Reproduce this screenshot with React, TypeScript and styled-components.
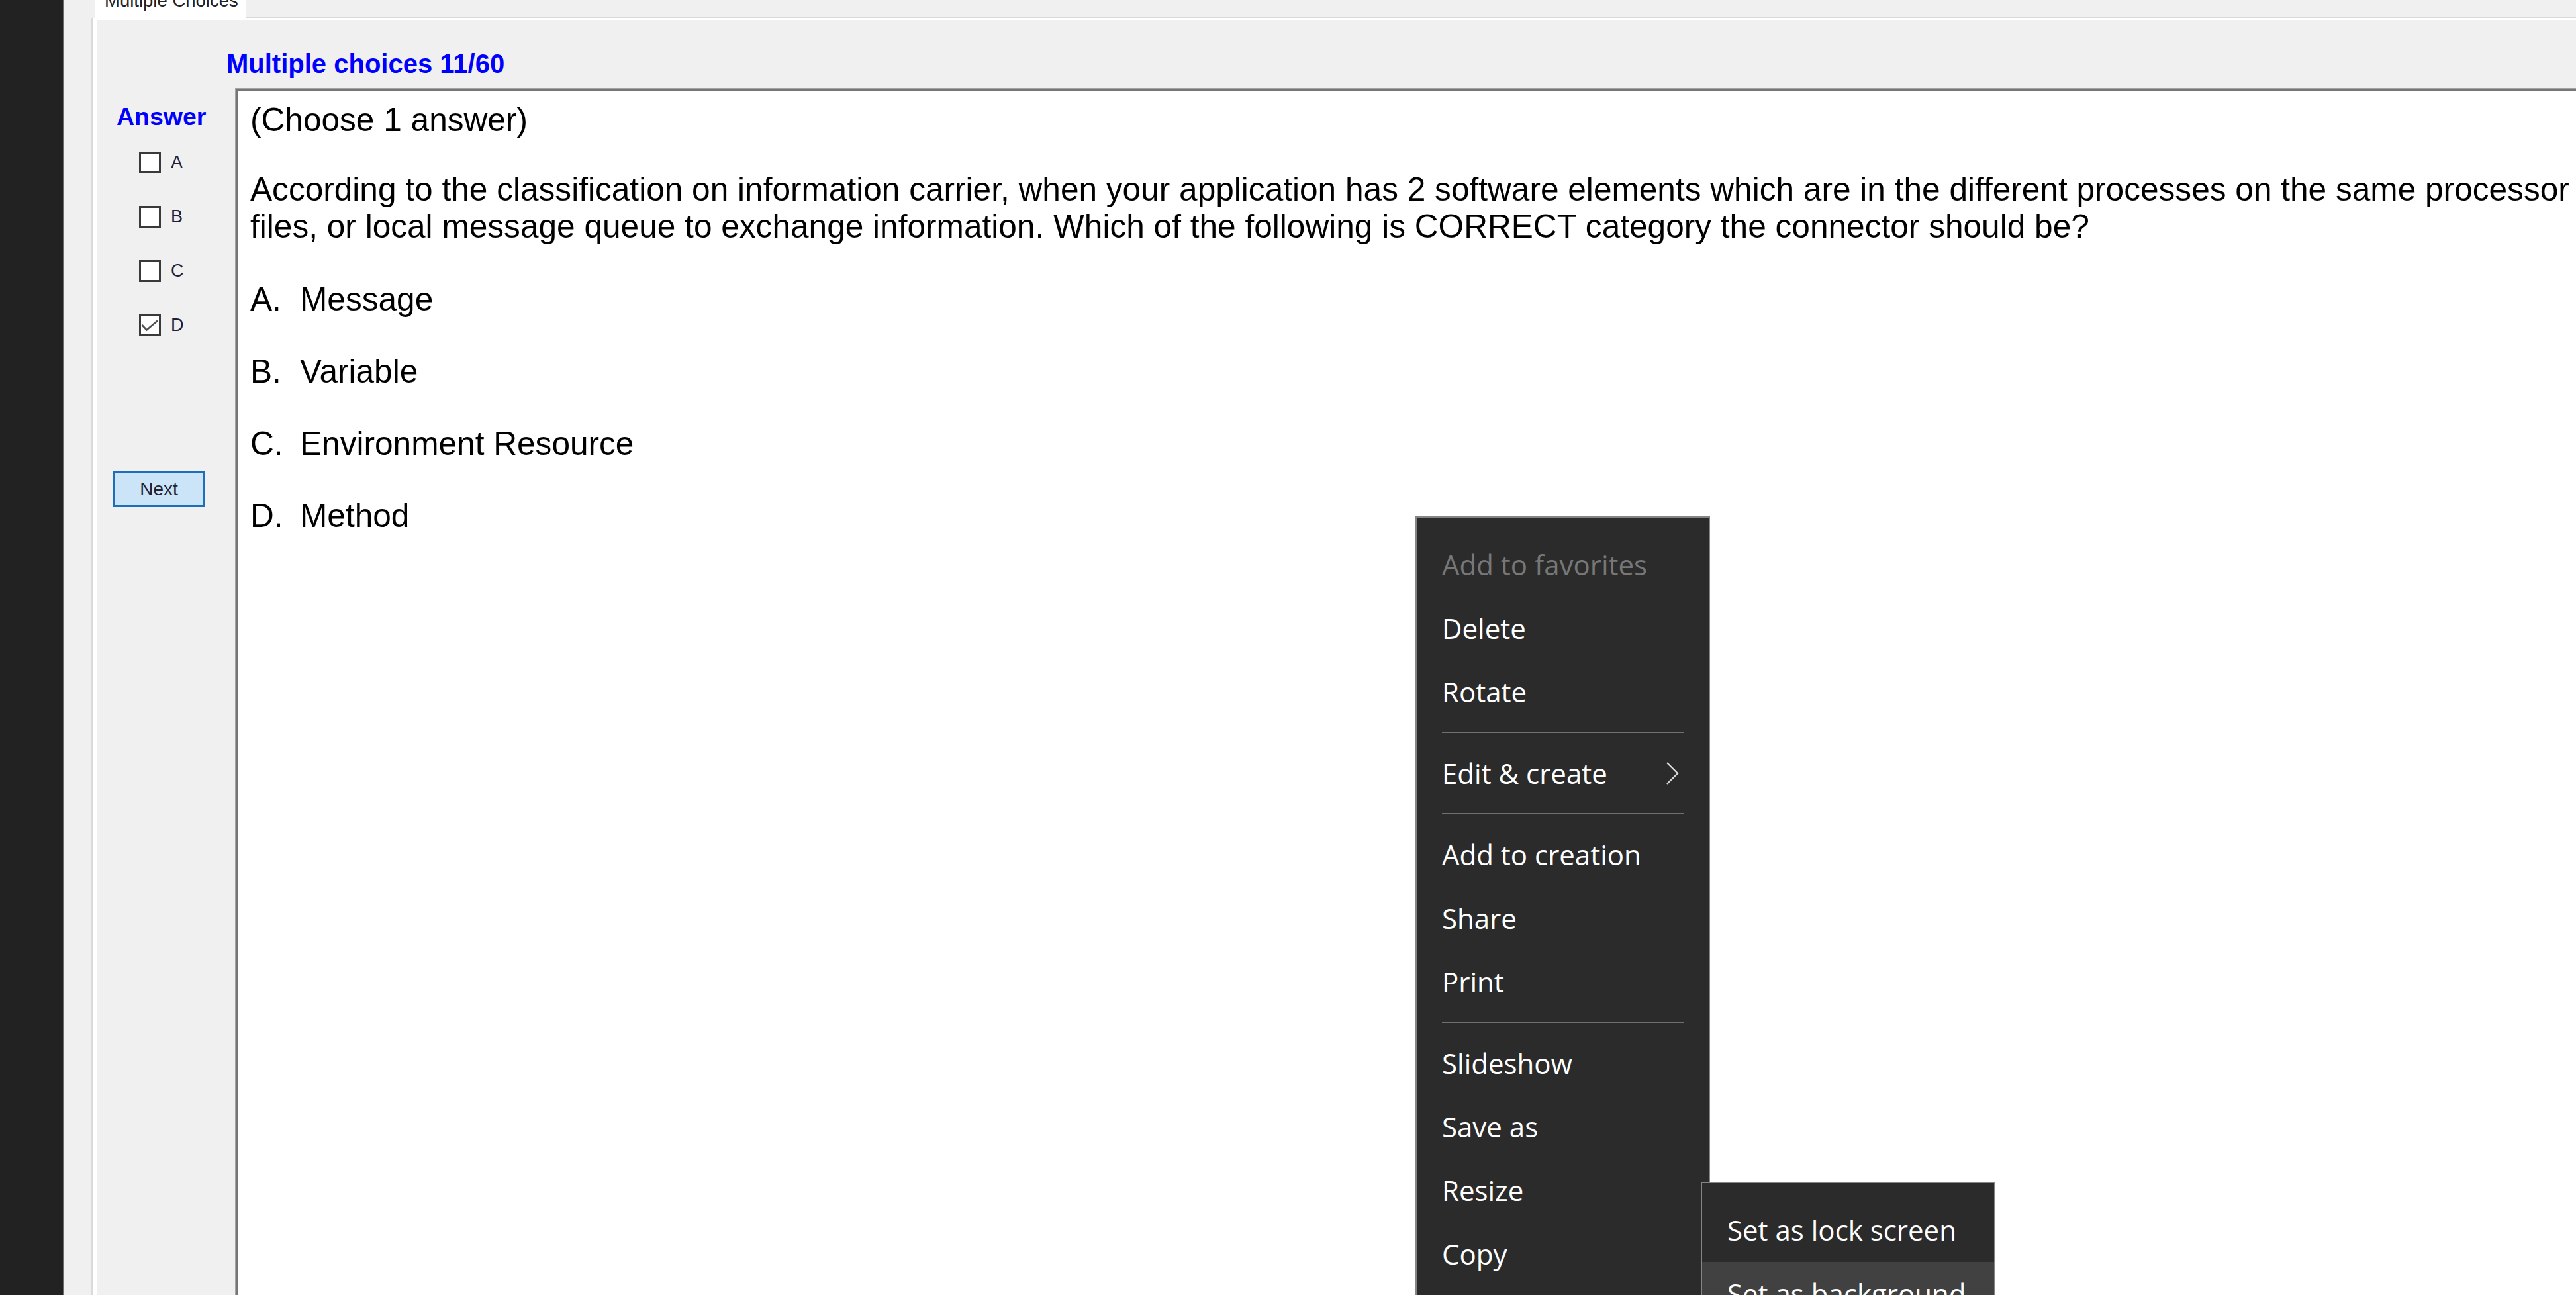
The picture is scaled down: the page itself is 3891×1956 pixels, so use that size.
import React from "react";
import styled, { createGlobalStyle } from "styled-components";

const Global = createGlobalStyle`
  html, body { margin: 0; padding: 0; background: #f0f0f0; }
  body { overflow: hidden; }
`;

const Screen = styled.div`
  position: relative;
  display: flex;
  width: 3891px;
  height: 1956px;
  overflow: hidden;
  background: #f0f0f0;
  font-family: "Liberation Sans", Arial, sans-serif;
`;

const DarkStrip = styled.div`
  flex: none;
  width: 95px;
  background: #222222;
  border-right: 1px solid #6b6b6b;
`;

const Window = styled.div`
  flex: 1;
  min-width: 0;
  display: flex;
  flex-direction: column;
  padding-left: 42px;
`;

const TabHeader = styled.div`
  flex: none;
  display: flex;
  height: 27px;
`;

const Tab = styled.div`
  flex: none;
  box-sizing: border-box;
  margin-left: 6px;
  width: 228px;
  height: 30px;
  padding-left: 14px;
  background: #ffffff;
  color: #222222;
  font-size: 27.5px;
  line-height: 30px;
  white-space: nowrap;
  position: relative;
  z-index: 1;
`;

const TabLabel = styled.span`
  display: block;
  margin-top: -14px;
`;

const TabFiller = styled.div`
  flex: 1;
  box-sizing: border-box;
  border-bottom: 2px solid #d9d9d9;
`;

const Panel = styled.div`
  flex: 1;
  display: flex;
  flex-direction: column;
  border-left: 2px solid #dadada;
`;

const PanelBody = styled.div`
  flex: 1;
  display: flex;
  flex-direction: column;
  border-left: 6px solid #ffffff;
  border-top: 3px solid #ffffff;
  padding-top: 44px;
`;

const Title = styled.div`
  padding-left: 196px;
  font-size: 40px;
  line-height: 44px;
  font-weight: bold;
  color: #0000ff;
  white-space: nowrap;
`;

const MainRow = styled.div`
  flex: 1;
  display: flex;
  margin-top: 15px;
`;

const LeftCol = styled.div`
  flex: none;
  width: 209px;
  display: flex;
  flex-direction: column;
`;

const AnswerTitle = styled.div`
  margin-top: 21px;
  padding-left: 30px;
  font-size: 37.5px;
  line-height: 44px;
  font-weight: bold;
  color: #0000ff;
`;

const ChoiceList = styled.div`
  display: flex;
  flex-direction: column;
  gap: 49px;
  margin-top: 31px;
  padding-left: 64px;
`;

const ChoiceRow = styled.div`
  display: flex;
  align-items: center;
  gap: 15px;
  height: 33px;
`;

const Box = styled.div`
  flex: none;
  box-sizing: border-box;
  width: 33px;
  height: 33px;
  border: 3px solid #3a3a3a;
  background: #ffffff;
  display: flex;
`;

const ChoiceLabel = styled.span`
  font-size: 27px;
  color: #1e1e3a;
`;

const NextButton = styled.div`
  box-sizing: border-box;
  margin-top: 204px;
  margin-left: 25px;
  width: 138px;
  height: 54px;
  display: flex;
  align-items: center;
  justify-content: center;
  background: #cce4f7;
  border: 3px solid #1c6fba;
  font-size: 28px;
  color: #222233;
`;

const ContentBox = styled.div`
  flex: 1;
  margin-right: -80px;
  margin-bottom: -80px;
  background: #ffffff;
  border: 2px solid #a3a3a3;
  box-shadow: inset 3px 3px 0 #767676;
  padding: 18px 0 0 21px;
  color: #000000;
  font-size: 49.6px;
  line-height: 56px;
  white-space: nowrap;
`;

const Line = styled.div``;

const Question = styled.div`
  margin-top: 49px;
`;

const Options = styled.div`
  display: flex;
  flex-direction: column;
  gap: 53px;
  margin-top: 54px;
`;

const Option = styled.div`
  display: flex;
`;

const OptionKey = styled.span`
  width: 75px;
  flex: none;
`;

const Menu = styled.div<{ $left: number; $top: number }>`
  position: absolute;
  left: ${(p) => p.$left}px;
  top: ${(p) => p.$top}px;
  bottom: -120px;
  width: 445px;
  box-sizing: border-box;
  background: #2b2b2b;
  border: 2px solid #858585;
  padding-top: 23px;
  font-family: "Open Sans", "Noto Sans", sans-serif;
  font-size: 42px;
  z-index: 5;
`;

const MenuItem = styled.div<{ $disabled?: boolean; $active?: boolean }>`
  display: flex;
  align-items: center;
  justify-content: space-between;
  height: 96px;
  line-height: 96px;
  padding: 0 45px 0 38px;
  white-space: nowrap;
  color: ${(p) => (p.$disabled ? "#777777" : "#ffffff")};
  background: ${(p) => (p.$active ? "#414141" : "transparent")};
`;

const Separator = styled.div`
  height: 2px;
  margin: 12px 37px 13px 38px;
  background: #707070;
`;

const Chevron = () => (
  <svg width="20" height="36" viewBox="0 0 20 36">
    <polyline points="2,2 18,18 2,34" fill="none" stroke="#d8d8d8" strokeWidth="2.4" />
  </svg>
);

const Check = () => (
  <svg width="27" height="27" viewBox="0 0 27 27">
    <polyline points="1.5,13 8.5,20.5 25,6.5" fill="none" stroke="#505050" strokeWidth="2.6" />
  </svg>
);

const choices = [
  { key: "A", checked: false },
  { key: "B", checked: false },
  { key: "C", checked: false },
  { key: "D", checked: true },
];

const options = [
  { key: "A.", text: "Message" },
  { key: "B.", text: "Variable" },
  { key: "C.", text: "Environment Resource" },
  { key: "D.", text: "Method" },
];

export default function App() {
  return (
    <>
      <Global />
      <Screen>
        <DarkStrip />
        <Window>
          <TabHeader>
            <Tab>
              <TabLabel>Multiple Choices</TabLabel>
            </Tab>
            <TabFiller />
          </TabHeader>
          <Panel>
            <PanelBody>
              <Title>Multiple choices 11/60</Title>
              <MainRow>
                <LeftCol>
                  <AnswerTitle>Answer</AnswerTitle>
                  <ChoiceList>
                    {choices.map((c) => (
                      <ChoiceRow key={c.key}>
                        <Box>{c.checked && <Check />}</Box>
                        <ChoiceLabel>{c.key}</ChoiceLabel>
                      </ChoiceRow>
                    ))}
                  </ChoiceList>
                  <NextButton>Next</NextButton>
                </LeftCol>
                <ContentBox>
                  <Line>(Choose 1 answer)</Line>
                  <Question>
                    <Line>
                      According to the classification on information carrier, when your application has 2 software
                      elements which are in the different processes on the same processor and
                    </Line>
                    <Line>
                      files, or local message queue to exchange information. Which of the following is CORRECT
                      category the connector should be?
                    </Line>
                  </Question>
                  <Options>
                    {options.map((o) => (
                      <Option key={o.key}>
                        <OptionKey>{o.key}</OptionKey>
                        <span>{o.text}</span>
                      </Option>
                    ))}
                  </Options>
                </ContentBox>
              </MainRow>
            </PanelBody>
          </Panel>
        </Window>

        <Menu $left={2138} $top={780}>
          <MenuItem $disabled>Add to favorites</MenuItem>
          <MenuItem>Delete</MenuItem>
          <MenuItem>Rotate</MenuItem>
          <Separator />
          <MenuItem>
            <span>Edit &amp; create</span>
            <Chevron />
          </MenuItem>
          <Separator />
          <MenuItem>Add to creation</MenuItem>
          <MenuItem>Share</MenuItem>
          <MenuItem>Print</MenuItem>
          <Separator />
          <MenuItem>Slideshow</MenuItem>
          <MenuItem>Save as</MenuItem>
          <MenuItem>Resize</MenuItem>
          <MenuItem>Copy</MenuItem>
        </Menu>

        <Menu $left={2569} $top={1785}>
          <MenuItem>Set as lock screen</MenuItem>
          <MenuItem $active>Set as background</MenuItem>
        </Menu>
      </Screen>
    </>
  );
}
